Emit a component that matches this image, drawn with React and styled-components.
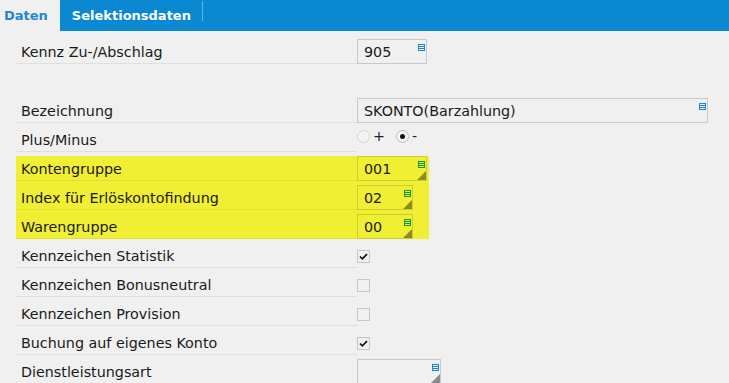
import React from 'react';
import styled, { createGlobalStyle } from 'styled-components';

const GlobalStyle = createGlobalStyle`
  body {
    margin: 0;
    background: #f0f0f0;
    font-family: "DejaVu Sans", Verdana, sans-serif;
    font-size: 14.3px;
    color: #1a1a1a;
  }
`;

const TabBar = styled.div`
  display: flex;
  height: 31px;
  background: #0a88d1;
`;

const Tab = styled.div`
  display: flex;
  align-items: center;
  padding: ${props => props.$active ? '0 12px 0 4px' : '0 11px 0 12px'};
  background: ${props => props.$active ? '#f0f0f0' : 'transparent'};
  color: ${props => props.$active ? '#1f86cf' : '#ffffff'};
  font-size: 13px;
  font-weight: bold;
`;

const TabDivider = styled.div`
  width: 1px;
  height: 20px;
  margin-top: 1px;
  background: #5db3e6;
`;

const Form = styled.div`
  display: flex;
  flex-direction: column;
  padding-left: 16px;
`;

const Highlight = styled.div`
  width: 413px;
  background: linear-gradient(transparent 4px, #f0ef34 4px);
`;

const Row = styled.div`
  display: grid;
  grid-template-columns: 341px auto;
  height: ${props => props.$h || 29}px;
  margin-top: ${props => props.$top || 0}px;
`;

const Label = styled.div`
  display: flex;
  align-items: center;
  box-sizing: border-box;
  padding: 6px 0 0 5px;
  border-bottom: 1px solid ${props => props.$hl ? '#e2e12e' : props.$plain ? 'transparent' : '#dfdfdf'};
`;

const Value = styled.div`
  display: flex;
  align-items: flex-end;
`;

const Field = styled.div`
  position: relative;
  display: flex;
  align-items: center;
  box-sizing: border-box;
  width: ${props => props.$w}px;
  height: 25px;
  padding-left: 6px;
  border: 1px solid ${props => props.$hl ? 'rgba(0,0,0,0.14)' : '#c9c9c9'};
`;

const ListIcon = styled.svg`
  position: absolute;
  top: 4px;
  right: 1px;
`;

const Corner = styled.div`
  position: absolute;
  right: 0;
  bottom: 0;
  width: 0;
  height: 0;
  border-style: solid;
  border-width: 0 0 9px 9px;
  border-color: transparent transparent rgba(0,0,0,0.42) transparent;
`;

const Check = styled.div`
  display: flex;
  align-items: center;
  justify-content: center;
  box-sizing: border-box;
  width: 13px;
  height: 13px;
  margin-bottom: 5px;
  border: 1px solid #c6c6c6;
`;

const RadioGroup = styled.div`
  display: flex;
  align-items: center;
  gap: 3px;
  margin-bottom: 8px;
`;

const Radio = styled.div`
  display: flex;
  align-items: center;
  justify-content: center;
  box-sizing: border-box;
  width: 13px;
  height: 13px;
  border-radius: 50%;
  border: 1px solid ${props => props.$on ? '#bdbdbd' : '#d6d6d6'};
  background: #f4f4f4;

  &::after {
    content: '';
    display: ${props => props.$on ? 'block' : 'none'};
    width: 5px;
    height: 5px;
    border-radius: 50%;
    background: #111;
  }
`;

const RadioText = styled.span`
  margin-right: 8px;
  color: #2a1a3a;
`;

const List = ({ color }) => (
  <ListIcon width="7" height="7" viewBox="0 0 7 7">
    <rect x="0.5" y="0.5" width="6" height="6" fill="none" stroke={color} />
    <rect x="0" y="2" width="7" height="1" fill={color} />
    <rect x="0" y="4" width="7" height="1" fill={color} />
  </ListIcon>
);

const Input = ({ w, value, hl, corner }) => (
  <Field $w={w} $hl={hl}>
    {value}
    <List color={hl ? '#0a9a3a' : '#1788d8'} />
    {corner && <Corner />}
  </Field>
);

const CheckBox = ({ on }) => (
  <Check>
    {on && (
      <svg width="9" height="7" viewBox="0 0 9 7">
        <path d="M1 3.5 L3.3 5.8 L8 1.2" fill="none" stroke="#111" strokeWidth="1.7" />
      </svg>
    )}
  </Check>
);

const Line = ({ label, children, hl, top }) => (
  <Row $top={top}>
    <Label $hl={hl}>{label}</Label>
    <Value>{children}</Value>
  </Row>
);

const App = () => (
  <>
    <GlobalStyle />
    <TabBar>
      <Tab $active>Daten</Tab>
      <Tab>Selektionsdaten</Tab>
      <TabDivider />
    </TabBar>
    <Form>
      <Line label="Kennz Zu-/Abschlag" top={4}>
        <Input w={70} value="905" />
      </Line>
      <Row $h={30}>
        <Label $plain />
        <Value />
      </Row>
      <Line label="Bezeichnung">
        <Input w={351} value="SKONTO(Barzahlung)" />
      </Line>
      <Line label="Plus/Minus">
        <RadioGroup>
          <Radio />
          <RadioText>+</RadioText>
          <Radio $on />
          <RadioText>-</RadioText>
        </RadioGroup>
      </Line>
      <Highlight>
        <Line label="Kontengruppe" hl>
          <Input w={70} value="001" hl corner />
        </Line>
        <Line label="Index für Erlöskontofindung" hl>
          <Input w={56} value="02" hl corner />
        </Line>
        <Line label="Warengruppe" hl>
          <Input w={56} value="00" hl corner />
        </Line>
      </Highlight>
      <Line label="Kennzeichen Statistik">
        <CheckBox on />
      </Line>
      <Line label="Kennzeichen Bonusneutral">
        <CheckBox />
      </Line>
      <Line label="Kennzeichen Provision">
        <CheckBox />
      </Line>
      <Line label="Buchung auf eigenes Konto">
        <CheckBox on />
      </Line>
      <Line label="Dienstleistungsart">
        <Input w={84} value="" corner />
      </Line>
    </Form>
  </>
);

export default App;
